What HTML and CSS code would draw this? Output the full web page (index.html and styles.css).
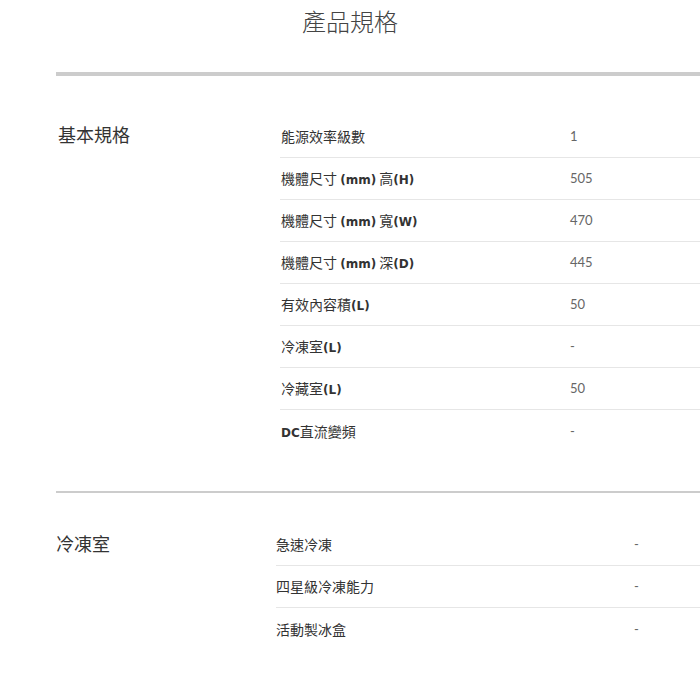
FILE: index.html
```html
<!DOCTYPE html>
<html lang="zh-Hant">
<head>
<meta charset="utf-8">
<title>產品規格</title>
<link rel="stylesheet" href="styles.css">
</head>
<body>
<h1 class="title">產品規格</h1>
<div class="spec">
  <section class="group group-basic">
    <h2 class="group-name">基本規格</h2>
    <div class="rows">
      <div class="row"><span class="key">能源效率級數</span><span class="val">1</span></div>
      <div class="row"><span class="key">機體尺寸 <b>(mm)</b> 高<b>(H)</b></span><span class="val">505</span></div>
      <div class="row"><span class="key">機體尺寸 <b>(mm)</b> 寬<b>(W)</b></span><span class="val">470</span></div>
      <div class="row"><span class="key">機體尺寸 <b>(mm)</b> 深<b>(D)</b></span><span class="val">445</span></div>
      <div class="row"><span class="key">有效內容積<b>(L)</b></span><span class="val">50</span></div>
      <div class="row"><span class="key">冷凍室<b>(L)</b></span><span class="val">-</span></div>
      <div class="row"><span class="key">冷藏室<b>(L)</b></span><span class="val">50</span></div>
      <div class="row"><span class="key"><b>DC</b>直流變頻</span><span class="val">-</span></div>
    </div>
  </section>
  <section class="group group-freezer">
    <h2 class="group-name">冷凍室</h2>
    <div class="rows">
      <div class="row"><span class="key">急速冷凍</span><span class="val">-</span></div>
      <div class="row"><span class="key">四星級冷凍能力</span><span class="val">-</span></div>
      <div class="row"><span class="key">活動製冰盒</span><span class="val">-</span></div>
    </div>
  </section>
</div>
</body>
</html>
```
FILE: styles.css
```css
html, body {
  margin: 0;
  padding: 0;
  background: #fff;
  overflow: hidden;
}
body {
  font-family: "Noto Sans CJK TC", "Noto Sans CJK SC", sans-serif;
  color: #333;
}
.title {
  margin: 0;
  padding-top: 4px;
  height: 66px;
  box-sizing: border-box;
  font-size: 24px;
  line-height: 34px;
  font-weight: 300;
  text-align: center;
  color: #444;
}
.spec {
  margin-left: 56px;
}
.group {
  display: flex;
  align-items: flex-start;
}
.group-basic {
  border-top: 4px solid #cccccc;
  padding-top: 40px;
  padding-bottom: 39px;
  margin-top: 6px;
}
.group-freezer {
  border-top: 2px solid #cccccc;
  padding-top: 31px;
}
.group-name {
  margin: 0;
  font-size: 18px;
  line-height: 24px;
  font-weight: 400;
  color: #333;
}
.group-basic .group-name {
  width: 222px;
  padding-left: 2px;
  padding-top: 6px;
}
.group-freezer .group-name {
  width: 220px;
  padding-top: 7px;
}
.rows {
  flex: 1;
}
.row {
  display: flex;
  align-items: center;
  height: 42px;
  border-bottom: 1px solid #e6e6e6;
  box-sizing: border-box;
  font-size: 14px;
  padding-bottom: 1px;
}
.row:last-child {
  border-bottom: none;
}
.key {
  color: #333;
  padding-left: 1px;
}
.group-basic .key { width: 289px; }
.group-freezer .key { width: 358px; padding-left: 0; }
.key b {
  font-family: "DejaVu Sans", sans-serif;
  font-weight: 700;
  font-size: 12px;
  color: #333;
}
.val {
  font-family: "Lato", "Liberation Sans", sans-serif;
  font-weight: 400;
  font-size: 13px;
  color: #666;
}
```
